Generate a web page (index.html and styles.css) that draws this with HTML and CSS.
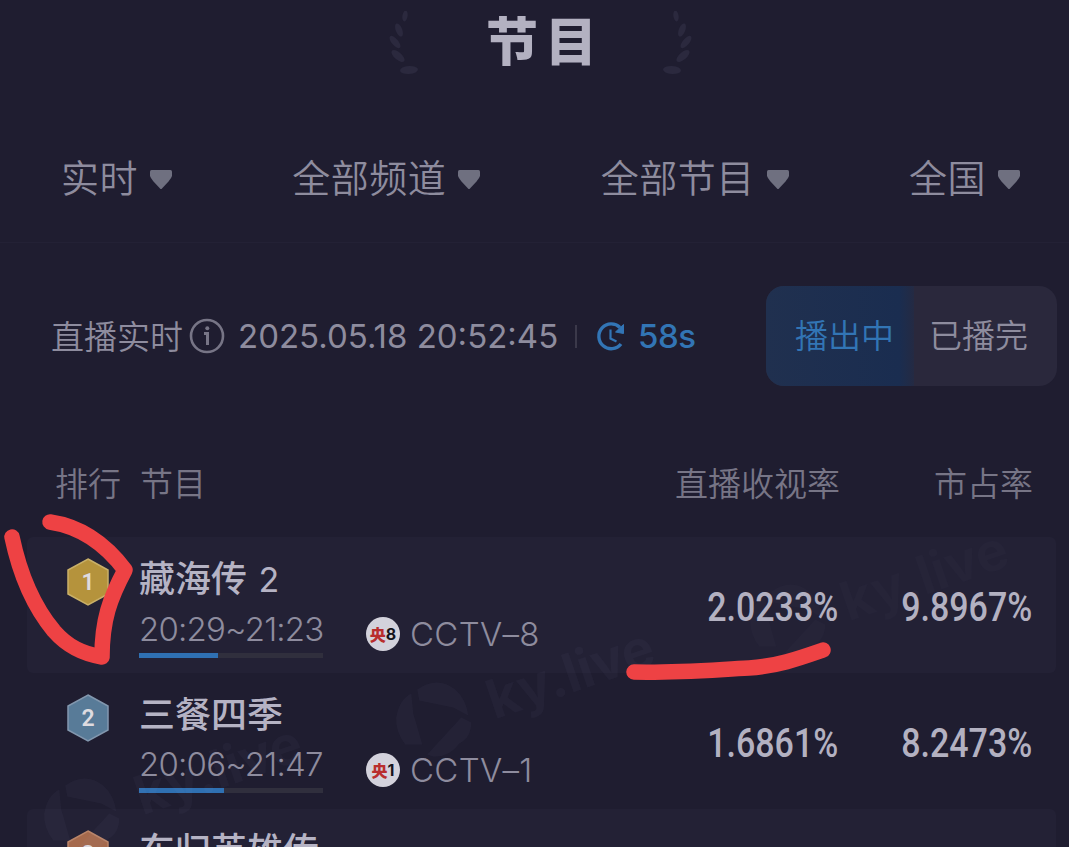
FILE: index.html
```html
<!DOCTYPE html>
<html lang="zh-CN">
<head>
    <meta charset="UTF-8">
    <meta name="viewport" content="width=device-width, initial-scale=1.0">
    <title>节目</title>
    <link rel="stylesheet" href="styles.css">
</head>
<body>
    <svg width="0" height="0" class="defs">
        <symbol id="arrow" viewBox="0 0 22 20">
            <path d="M1.5 0H20.5Q22 0 22 1.5V6Q21.5 8 18.5 11.5L12 18.5Q11 19.5 10 18.5L3.5 11.5Q0.5 8 0 6V1.5Q0 0 1.5 0Z" fill="#6f7080"/>
        </symbol>
        <symbol id="laurel" viewBox="0 0 30 64">
            <g fill="#2b293e">
                <ellipse cx="16" cy="5" rx="2.6" ry="5.5" transform="rotate(8 16 5)"/>
                <ellipse cx="10" cy="19" rx="3.2" ry="7" transform="rotate(-22 10 19)"/>
                <ellipse cx="6" cy="31" rx="3.3" ry="7.5" transform="rotate(-40 6 31)"/>
                <ellipse cx="9" cy="45" rx="3.7" ry="8" transform="rotate(-50 9 45)"/>
                <ellipse cx="20" cy="59" rx="9" ry="4" transform="rotate(-4 20 59)"/>
            </g>
        </symbol>
        <symbol id="playlogo" viewBox="0 0 76 76">
            <path d="M22 8Q42 -6 60 8Q71 18 73 34L58 26L24 19Z"/>
            <path d="M66 36L76 41Q76 56 64 62Q54 76 38 75L32 73Z"/>
            <path d="M16 12L18 32L27 63L10 63Q0 50 1 36Q4 18 16 12Z"/>
        </symbol>
    </svg>

    <header class="title-bar">
        <svg class="laurel"><use href="#laurel"/></svg>
        <h1>节目</h1>
        <svg class="laurel flip"><use href="#laurel"/></svg>
    </header>

    <nav class="filters">
        <div class="filter">实时<svg class="arrow"><use href="#arrow"/></svg></div>
        <div class="filter">全部频道<svg class="arrow"><use href="#arrow"/></svg></div>
        <div class="filter">全部节目<svg class="arrow"><use href="#arrow"/></svg></div>
        <div class="filter">全国<svg class="arrow"><use href="#arrow"/></svg></div>
    </nav>

    <section class="status">
        <span class="live-label">直播实时</span>
        <svg class="info" viewBox="0 0 36 36" fill="none" stroke="#777586">
            <circle cx="18" cy="18" r="16" stroke-width="2.6"/>
            <path d="M15 15.5H18.5V27" stroke-width="3"/>
            <circle cx="18.3" cy="10.3" r="2" fill="#777586" stroke="none"/>
        </svg>
        <span class="clock">2025.05.18 20:52:45</span>
        <span class="divider"></span>
        <svg class="refresh" viewBox="0 0 30 32" fill="none" stroke="#3275b5">
            <path d="M24 7.5A12.4 12.4 0 1 0 25 24" stroke-width="3.4"/>
            <path d="M27.5 4.5V13.5L19.5 12Z" fill="#3275b5" stroke-width="1"/>
            <path d="M14.5 9.5V18.5L20.5 21.5" stroke-width="2.2"/>
        </svg>
        <span class="countdown">58s</span>
        <div class="toggle">
            <span class="on">播出中</span>
            <span class="off">已播完</span>
        </div>
    </section>

    <main class="ranking">
        <div class="table-head">
            <span>排行</span>
            <span class="col-name">节目</span>
            <span class="col-rate">直播收视率</span>
            <span class="col-share">市占率</span>
        </div>

        <div class="row odd">
            <svg class="badge" viewBox="0 0 42 48">
                <path d="M21 1L41 12V36L21 47L1 36V12Z" fill="#b5933c" stroke="#c9b068" stroke-width="1.5"/>
                <text x="21" y="32">1</text>
            </svg>
            <div class="program">
                <h2>藏海传 <span class="num">2</span></h2>
                <div class="time">20:29~21:23</div>
                <div class="progress"><i style="width: 43%"></i></div>
            </div>
            <div class="channel"><span class="logo"><b>央</b>8</span><span class="channel-name">CCTV–8</span></div>
            <div class="rate"><span>2.0233%</span></div>
            <div class="share"><span>9.8967%</span></div>
        </div>

        <div class="row">
            <svg class="badge" viewBox="0 0 42 48">
                <path d="M21 1L41 12V36L21 47L1 36V12Z" fill="#587b98" stroke="#8297ae" stroke-width="1.5"/>
                <text x="21" y="32">2</text>
            </svg>
            <div class="program">
                <h2>三餐四季</h2>
                <div class="time">20:06~21:47</div>
                <div class="progress"><i style="width: 46%"></i></div>
            </div>
            <div class="channel"><span class="logo"><b>央</b>1</span><span class="channel-name">CCTV–1</span></div>
            <div class="rate"><span>1.6861%</span></div>
            <div class="share"><span>8.2473%</span></div>
        </div>

        <div class="row odd">
            <svg class="badge" viewBox="0 0 42 48">
                <path d="M21 1L41 12V36L21 47L1 36V12Z" fill="#a5694c" stroke="#b98468" stroke-width="1.5"/>
                <text x="21" y="32">3</text>
            </svg>
            <div class="program">
                <h2>东归英雄传</h2>
            </div>
        </div>
    </main>

    <!-- watermarks -->
    <div class="watermark w1"><svg><use href="#playlogo"/></svg><span>ky.live</span></div>
    <div class="watermark w2"><svg><use href="#playlogo"/></svg><span>ky.live</span></div>
    <div class="watermark w3"><svg><use href="#playlogo"/></svg><span>ky.live</span></div>

    <!-- red pen marks -->
    <svg class="pen" viewBox="0 0 1069 847">
        <path d="M12 537C20 575 34 607 54 631C68 647 83 654 102 657C102 620 110 598 125 570C107 546 84 527 50 522"/>
        <path d="M634 672C675 673 710 670 749 668C778 666 800 658 823 650"/>
    </svg>
</body>
</html>
```

FILE: styles.css
```css
* {
    box-sizing: border-box;
}

body {
    margin: 0;
    height: 847px;
    overflow: hidden;
    position: relative;
    background-color: #1f1d30;
    color: #8e8c9e;
    font-family: Inter, "Noto Sans CJK SC", sans-serif;
}

.defs {
    position: absolute;
}

.title-bar {
    display: flex;
    justify-content: center;
    align-items: center;
    height: 86px;
    padding-left: 12px;
}

.title-bar h1 {
    margin: 0 62px 0 67px;
    width: 114px;
    font-size: 52px;
    font-weight: 900;
    line-height: 80px;
    letter-spacing: 7px;
    white-space: nowrap;
    color: #b3b1c1;
}

.laurel {
    width: 30px;
    height: 64px;
}

.flip {
    transform: scaleX(-1);
}

.filters {
    display: flex;
    justify-content: space-between;
    align-items: center;
    height: 157px;
    padding: 28px 49px 0 61px;
    border-bottom: 1px solid #232135;
}

.filter {
    display: flex;
    align-items: center;
    font-size: 38px;
    font-weight: 350;
    letter-spacing: 0.5px;
    line-height: 56px;
}

.arrow {
    width: 22px;
    height: 20px;
    margin: 3px 0 0 12px;
}

.status {
    display: flex;
    align-items: center;
    height: 186px;
    padding: 0 12px 0 51px;
    font-size: 33px;
}

.live-label {
    width: 138px;
    margin-top: -3px;
    font-weight: 350;
}

.info {
    width: 36px;
    height: 36px;
}

.clock {
    width: 323px;
    margin-left: 13px;
    white-space: nowrap;
}

.divider {
    width: 2px;
    height: 23px;
    margin-left: 14px;
    background-color: #3b394a;
}

.refresh {
    width: 30px;
    height: 32px;
    margin-left: 19px;
}

.countdown {
    margin-left: 12px;
    font-weight: 500;
    letter-spacing: -0.4px;
    color: #3275b5;
}

.toggle {
    display: flex;
    width: 291px;
    height: 100px;
    margin-left: auto;
    border-radius: 18px;
    overflow: hidden;
    background-color: #2a283c;
    font-weight: 350;
    line-height: 101px;
}

.on {
    width: 148px;
    padding-left: 29px;
    background: linear-gradient(90deg, #20304f, #1a2d50 90%, #242a43);
    color: #3275b5;
}

.off {
    padding-left: 15px;
}

.ranking {
    padding: 0 13px 0 27px;
}

.table-head {
    display: flex;
    height: 108px;
    padding: 30px 23px 0 28px;
    font-size: 33px;
    font-weight: 350;
    line-height: 50px;
    color: #777586;
}

.col-name {
    margin-left: 19px;
}

.col-rate {
    margin-left: auto;
}

.col-share {
    width: 193px;
    text-align: right;
}

.row {
    display: flex;
    height: 136px;
    padding: 0 24px 0 40px;
    border-radius: 6px;
}

.odd {
    background-color: #232135;
}

.badge {
    width: 42px;
    height: 48px;
    margin-top: 21px;
}

.badge text {
    font-family: Roboto, sans-serif;
    font-size: 23px;
    font-weight: 600;
    text-anchor: middle;
    fill: #dedbe0;
}

.program {
    width: 226px;
    margin-left: 30px;
    padding-top: 17px;
}

.program h2 {
    margin: 0;
    font-size: 36px;
    font-weight: 500;
    line-height: 50px;
    white-space: nowrap;
    color: #b5b3c4;
}

.num {
    margin-left: 2px;
    font-size: 34px;
    font-weight: 400;
}

.time {
    font-size: 33px;
    font-weight: 300;
    letter-spacing: -0.8px;
    line-height: 48px;
}

.progress {
    width: 184px;
    height: 5px;
    background-color: #302f3d;
}

.progress i {
    display: block;
    height: 5px;
    background-color: #2f70b2;
}

.channel {
    display: flex;
    align-items: center;
    height: 50px;
    margin-top: 72px;
}

.logo {
    display: flex;
    justify-content: center;
    align-items: center;
    width: 34px;
    height: 34px;
    margin-left: 1px;
    border-radius: 50%;
    background-color: #d3d2dc;
    color: #16141c;
    font-size: 16px;
    font-weight: 700;
}

.logo b {
    color: #b92e2e;
}

.channel-name {
    margin-left: 10px;
    font-size: 33px;
    font-weight: 300;
    letter-spacing: 0.3px;
}

.rate,
.share {
    padding-top: 46px;
    font-family: Roboto, sans-serif;
    font-size: 40px;
    font-weight: 500;
    line-height: 50px;
    text-align: right;
    color: #b3b1c1;
}

.rate {
    margin-left: auto;
}

.share {
    width: 194px;
}

/* narrow digits */
.rate span,
.share span {
    display: inline-block;
    transform: scaleX(0.85);
    transform-origin: right;
}

.watermark {
    display: flex;
    align-items: center;
    position: absolute;
    transform: rotate(-19deg);
    color: rgba(170, 165, 200, 0.045);
    font-size: 54px;
    font-weight: 700;
}

.watermark svg {
    width: 76px;
    height: 76px;
    margin-right: 20px;
    fill: currentColor;
    transform: rotate(19deg);
}

.w1 {
    left: 390px;
    top: 650px;
}

.w2 {
    left: 744px;
    top: 552px;
    opacity: 0.6;
}

.w3 {
    left: 38px;
    top: 746px;
}

.pen {
    position: absolute;
    top: 0;
    left: 0;
    width: 1069px;
    height: 847px;
    fill: none;
    stroke: #ee4244;
    stroke-width: 15.5;
    stroke-linecap: round;
    stroke-linejoin: round;
}
```
